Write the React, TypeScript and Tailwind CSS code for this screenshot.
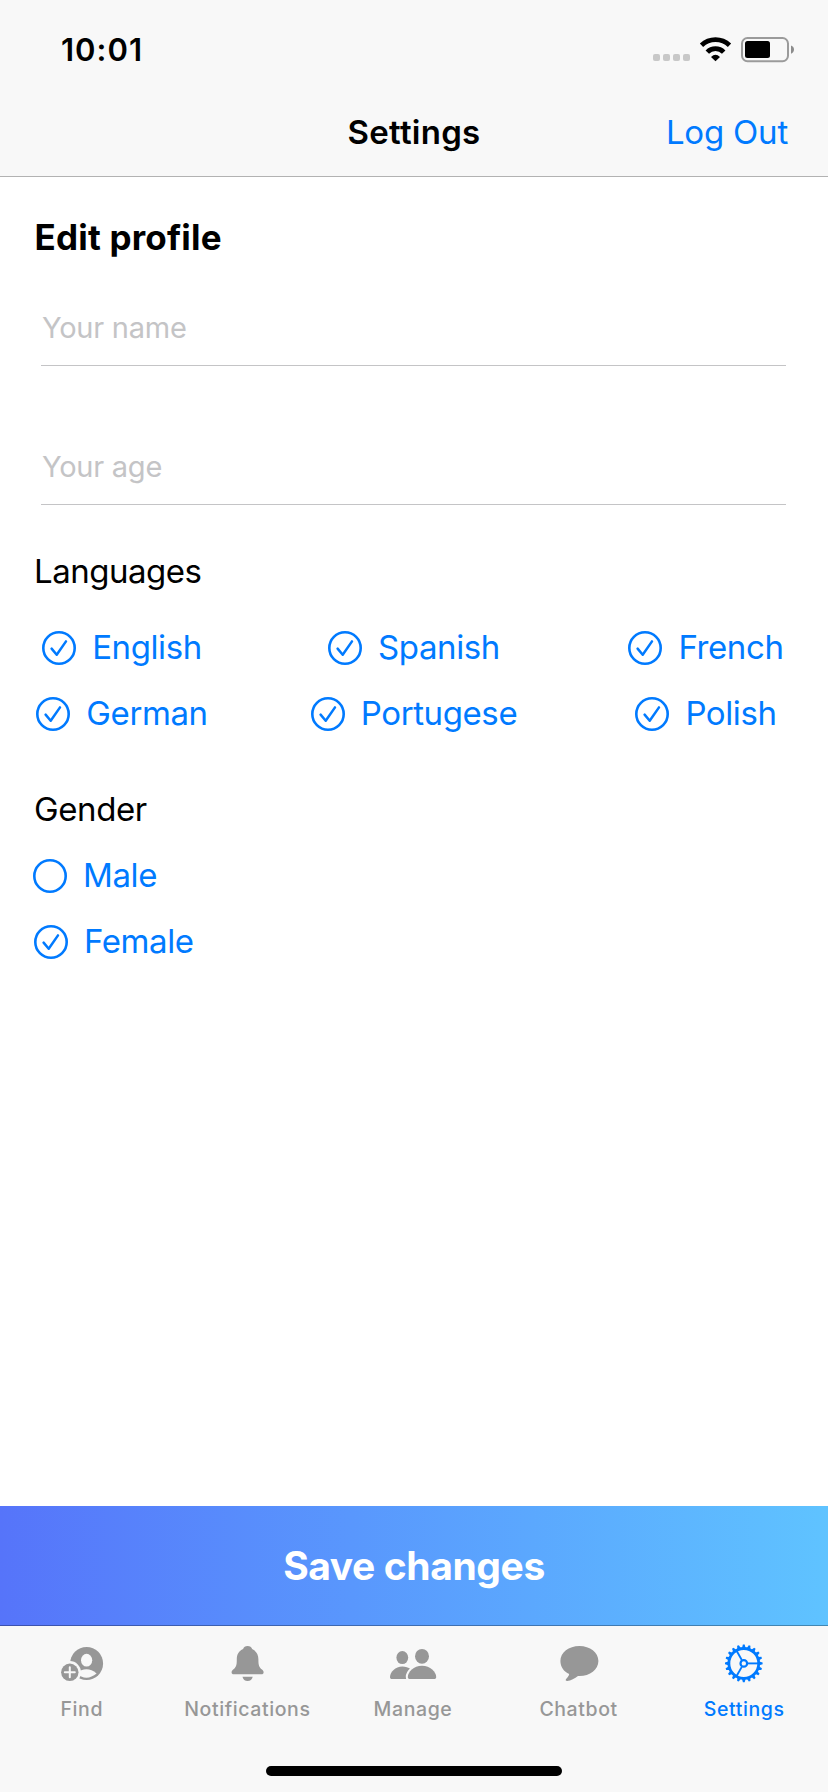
import { useState } from "react";
import type { ReactNode } from "react";

const StatusIcons = () => (
  <svg width="142" height="26" viewBox="0 0 142 26" className="shrink-0">
    {/* no signal */}
    <g fill="#c8c8c8">
      <rect x="0" y="17" width="7" height="7" rx="2" />
      <rect x="10" y="17" width="7" height="7" rx="2" />
      <rect x="20" y="17" width="7" height="7" rx="2" />
      <rect x="30" y="17" width="7" height="7" rx="2" />
    </g>
    {/* wifi */}
    <g fill="none" stroke="#000" strokeWidth="4.8">
      <path d="M48.5 8.3A20.3 20.3 0 0 1 76.5 8.3" />
      <path d="M54.3 15.1A11.4 11.4 0 0 1 70.7 15.1" />
    </g>
    <path d="M58 20Q62.5 15.6 67 20L62.5 24.2Z" fill="#000" />
    {/* battery */}
    <rect x="89" y="1" width="46" height="23.2" rx="5.5" fill="none" stroke="#9b9b9b" strokeWidth="2" />
    <rect x="92" y="4" width="25" height="17" rx="2.5" fill="#000" />
    <path d="M138 8.5Q141 9.7 141 12.6T138 16.7Z" fill="#8c8c8c" />
  </svg>
);

interface OptionProps {
  label: string;
  checked: boolean;
  onToggle: () => void;
  className?: string;
}

const Option = ({ label, checked, onToggle, className = "" }: OptionProps) => (
  <button
    type="button"
    onClick={onToggle}
    className={`flex h-[66px] items-center whitespace-nowrap text-[#007aff] ${className}`}
  >
    <svg width="34" height="34" viewBox="0 0 34 34" fill="none" stroke="currentColor" className="shrink-0">
      <circle cx="17" cy="17" r="15.7" strokeWidth="2.6" />
      {checked && (
        <path d="M9.6 17.6L14.7 23.7L24 10.4" strokeWidth="2.5" strokeLinecap="round" strokeLinejoin="round" />
      )}
    </svg>
    <span className="ml-4 pb-0.5 text-[33px] leading-10 tracking-[-0.4px]">{label}</span>
  </button>
);

const FindIcon = () => (
  <>
    <circle cx="27.6" cy="20.5" r="16.5" fill="currentColor" />
    <ellipse cx="27.6" cy="17.2" rx="5.6" ry="6.4" fill="#f8f8f8" />
    <path d="M17 30.5Q27.6 22.2 37.6 30.5Q27.6 38.8 17 30.5Z" fill="#f8f8f8" />
    <circle cx="10.8" cy="29.3" r="11.2" fill="#f8f8f8" />
    <circle cx="10.8" cy="29.3" r="8.7" fill="currentColor" />
    <path d="M5.8 29.3h10M10.8 24.3v10" stroke="#f8f8f8" strokeWidth="2" strokeLinecap="round" />
  </>
);

const BellIcon = () => (
  <>
    <path
      d="M23.6 3C21.3 3 19.6 4.2 19.1 6.1C14.9 8 12.8 11.5 12.8 16.2C12.8 22.5 12.2 23.9 9.2 26.6C8 27.7 7.6 28.4 7.6 29.4C7.6 30.5 8.4 31.2 9.8 31.2H37.4C38.8 31.2 39.6 30.5 39.6 29.4C39.6 28.4 39.2 27.7 38 26.6C35 23.9 34.4 22.5 34.4 16.2C34.4 11.5 32.3 8 28.1 6.1C27.6 4.2 25.9 3 23.6 3Z"
      fill="currentColor"
    />
    <path d="M18.5 33.8H28.7C28.2 36.4 26.2 38.1 23.6 38.1S19 36.4 18.5 33.8Z" fill="currentColor" />
  </>
);

const PeopleIcon = () => (
  <>
    <ellipse cx="12.3" cy="14.6" rx="5.9" ry="6.5" fill="currentColor" />
    <path d="M2 36C.7 36 0 35.2 0 33.9C0 29 5.4 23.4 12.3 23.4C15.6 23.4 18.4 24.4 20.6 26V36Z" fill="currentColor" />
    <path
      d="M20 36C18.6 36 17.8 35.3 17.8 33.9C17.8 29.2 23.7 22.7 32 22.7S46.2 29.2 46.2 33.9C46.2 35.3 45.4 36 44 36Z"
      fill="currentColor"
      stroke="#f8f8f8"
      strokeWidth="4"
      paintOrder="stroke"
    />
    <ellipse cx="32" cy="13.3" rx="7" ry="7.4" fill="currentColor" />
  </>
);

const ChatIcon = () => (
  <path
    d="M23.4 3C34 3 42.4 9.6 42.4 18S34 33.1 23.4 33.1H22C18.9 35.3 14.8 38 11.2 38C9.7 38 9.3 37 10.1 36C11.3 34.7 12.9 33.2 13.2 31.1C7.8 28.6 4.4 23.8 4.4 18C4.4 9.6 12.8 3 23.4 3Z"
    fill="currentColor"
  />
);

// 20 teeth, one every 18 degrees
const TEETH = Array.from({ length: 20 }, (_, i) => i * 18);

const GearIcon = () => (
  <g fill="none" stroke="currentColor" transform="translate(22.8 20.4)">
    <circle r="14.9" strokeWidth="2.8" />
    <circle r="3.3" strokeWidth="2.2" />
    {TEETH.map((deg) => (
      <path key={deg} d="M15.5 -1.8L18.8 -.9V.9L15.5 1.8Z" fill="currentColor" stroke="none" transform={`rotate(${deg})`} />
    ))}
    {[0, 120, 240].map((deg) => (
      <path key={deg} d="M4 0H14.5" strokeWidth="1.9" transform={`rotate(${deg})`} />
    ))}
  </g>
);

const tabs: { label: string; icon: ReactNode }[] = [
  { label: "Find", icon: <FindIcon /> },
  { label: "Notifications", icon: <BellIcon /> },
  { label: "Manage", icon: <PeopleIcon /> },
  { label: "Chatbot", icon: <ChatIcon /> },
  { label: "Settings", icon: <GearIcon /> },
];

// each column is centered on its own axis
const languageColumns = [
  ["English", "German"],
  ["Spanish", "Portugese"],
  ["French", "Polish"],
];

const genders = ["Male", "Female"];

export default function App() {
  const [languages, setLanguages] = useState<string[]>(languageColumns.flat());
  const [gender, setGender] = useState("Female");
  const [activeTab, setActiveTab] = useState("Settings");

  const toggleLanguage = (name: string) =>
    setLanguages((prev) =>
      prev.includes(name) ? prev.filter((l) => l !== name) : [...prev, name]
    );

  return (
    <div className="flex h-[1792px] w-[828px] flex-col overflow-hidden bg-white font-['Inter',sans-serif] text-black">
      <header className="border-b border-[#b2b2b2] bg-[#f8f8f8]">
        <div className="flex h-[88px] items-center justify-between pt-3 pl-[61px] pr-[33px]">
          <span className="text-[31px] leading-10 font-semibold tracking-[1px]">10:01</span>
          <StatusIcons />
        </div>
        <div className="grid h-[88px] grid-cols-3 items-center pr-10 pl-10 text-[33px] leading-10">
          <h1 className="col-start-2 text-center font-semibold tracking-[0.25px]">Settings</h1>
          <button type="button" className="text-right tracking-[-0.2px] text-[#007aff]">
            Log Out
          </button>
        </div>
      </header>

      <main className="flex-1 pt-10">
        <h2 className="ml-[34.5px] text-[35px] leading-10 font-bold tracking-[0.2px]">Edit profile</h2>
        <div className="mt-[33px] mr-[42px] ml-[41px] flex flex-col gap-[63px]">
          <input
            placeholder="Your name"
            className="h-[76px] border-b border-[#c4c4c6] pl-px text-[29px] tracking-[-0.25px] outline-none placeholder:text-[#c4c4c6]"
          />
          <input
            placeholder="Your age"
            className="h-[76px] border-b border-[#c4c4c6] pl-px text-[29px] tracking-[-0.25px] outline-none placeholder:text-[#c4c4c6]"
          />
        </div>

        <h3 className="mt-[46px] ml-[34px] text-[33px] leading-10 tracking-[-0.5px]">Languages</h3>
        <div className="mx-9 mt-6 flex justify-between">
          {languageColumns.map((column) => (
            <div key={column[0]} className="flex min-w-[172px] flex-col items-center">
              {column.map((name) => (
                <Option
                  key={name}
                  label={name}
                  checked={languages.includes(name)}
                  onToggle={() => toggleLanguage(name)}
                />
              ))}
            </div>
          ))}
        </div>

        <h3 className="mt-[42px] ml-[34px] text-[33px] leading-10 tracking-[-0.4px]">Gender</h3>
        <div className="mt-3.5 ml-[33px] flex flex-col items-start">
          {genders.map((name) => (
            <Option
              key={name}
              label={name}
              checked={gender === name}
              onToggle={() => setGender(name)}
              className={name === "Female" ? "ml-px" : ""}
            />
          ))}
        </div>
      </main>

      <button
        type="button"
        className="h-[120px] border-b border-black/30 bg-linear-to-r from-[#5674fa] to-[#5fc3ff] pt-0.5 text-[39px] font-bold tracking-[-0.4px] text-white"
      >
        Save changes
      </button>

      <nav className="flex h-[166px] flex-col items-center bg-[#f8f8f8]">
        <div className="grid w-full grid-cols-5 pt-[17px]">
          {tabs.map(({ label, icon }) => (
            <button
              key={label}
              type="button"
              onClick={() => setActiveTab(label)}
              className={`flex flex-col items-center ${
                activeTab === label ? "text-[#007aff]" : "text-[#979797]"
              }`}
            >
              <svg width="48" height="40" viewBox="0 0 48 40">
                {icon}
              </svg>
              <span className="mt-3.5 mr-0.5 text-[19.5px] leading-6 font-medium tracking-[0.6px]">{label}</span>
            </button>
          ))}
        </div>
        <div className="mt-auto mb-4 h-2.5 w-[296px] rounded-full bg-black" />
      </nav>
    </div>
  );
}
